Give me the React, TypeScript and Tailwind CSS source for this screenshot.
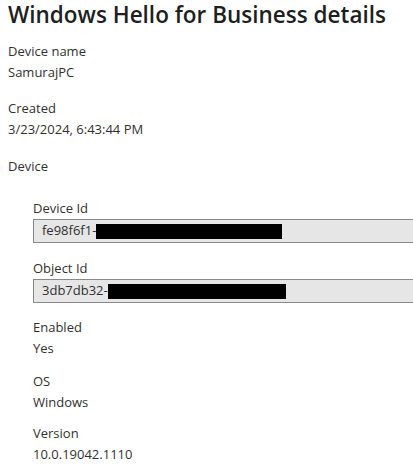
const font = { fontFamily: '"Open Sans", "Noto Sans", sans-serif' };

function Field({ label, value, top }: { label: string; value: string; top: string }) {
  return (
    <div className={top}>
      <div className="text-[13px] leading-[20px] text-[#323130]">{label}</div>
      <div className="text-[13px] leading-[20px] text-[#323130] mt-[1px]">{value}</div>
    </div>
  );
}

function IdBox({ label, prefix, redact, top }: { label: string; prefix: string; redact: string; top: string }) {
  return (
    <div className={top}>
      <div className="text-[13px] leading-[20px] text-[#323130]">{label}</div>
      <div className="mt-[1px] h-[24px] w-[400px] border border-[#8a8886] border-r-0 bg-[#e6e6e6] flex items-center pl-[8px] text-[13px] text-[#323130]">
        <span>{prefix}</span>
        <span className={`bg-black h-[15px] ${redact}`}></span>
      </div>
    </div>
  );
}

export default function App() {
  return (
    <div className="w-[413px] h-[466px] overflow-hidden bg-white px-[8px]" style={font}>
      <h1 className="text-[22.5px] leading-[30px] font-semibold text-[#201f1e]">Windows Hello for Business details</h1>
      <Field label="Device name" value="SamurajPC" top="mt-[11px]" />
      <Field label="Created" value="3/23/2024, 6:43:44 PM" top="mt-[16px]" />
      <div className="mt-[17px] text-[13px] leading-[20px] text-[#323130]">Device</div>
      <div className="pl-[25px]">
        <IdBox label="Device Id" prefix="fe98f6f1-" redact="w-[186px]" top="mt-[22px]" />
        <IdBox label="Object Id" prefix="3db7db32-" redact="w-[178px]" top="mt-[15px]" />
        <Field label="Enabled" value="Yes" top="mt-[14px]" />
        <Field label="OS" value="Windows" top="mt-[13px]" />
        <Field label="Version" value="10.0.19042.1110" top="mt-[11px]" />
      </div>
    </div>
  );
}
